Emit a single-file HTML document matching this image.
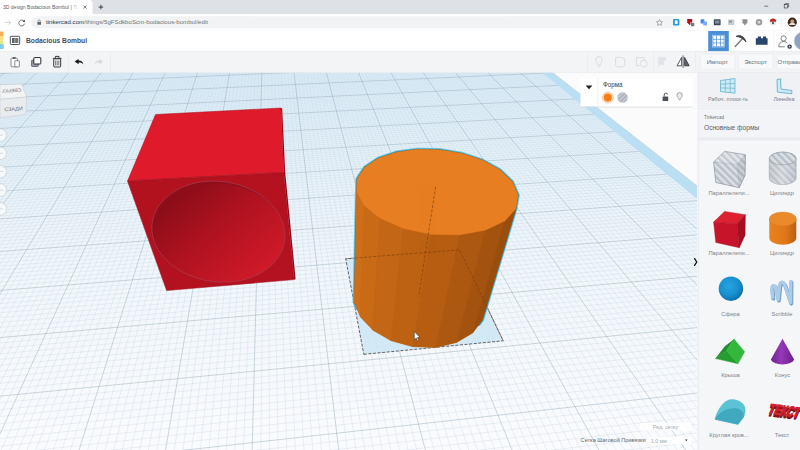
<!DOCTYPE html><html><head><meta charset="utf-8"><title>3D design Bodacious Bombul | Tinkercad</title><style>html,body{margin:0;padding:0;background:#fff;width:800px;height:450px;overflow:hidden}svg{display:block}</style></head><body><svg width="800" height="450" viewBox="0 0 800 450" font-family="'Liberation Sans',sans-serif">
<defs>
<linearGradient id="wpg" x1="0" y1="72" x2="0" y2="450" gradientUnits="userSpaceOnUse">
<stop offset="0" stop-color="#dbedf8"/><stop offset="0.2" stop-color="#e4f1f9"/><stop offset="0.5" stop-color="#f0f6fb"/><stop offset="1" stop-color="#fafbfe"/></linearGradient>
<linearGradient id="ming" x1="0" y1="72" x2="0" y2="450" gradientUnits="userSpaceOnUse"><stop offset="0" stop-color="#94aac2" stop-opacity="0.2"/><stop offset="0.2" stop-color="#94aac2" stop-opacity="0.3"/><stop offset="0.5" stop-color="#94aac2" stop-opacity="0.38"/><stop offset="1" stop-color="#94aac2" stop-opacity="0.42"/></linearGradient>
<clipPath id="cv"><rect x="0" y="72.5" width="697" height="378"/></clipPath>
<linearGradient id="holeg" x1="178" y1="188" x2="255" y2="278" gradientUnits="userSpaceOnUse">
<stop offset="0" stop-color="#8a0d18"/><stop offset="0.45" stop-color="#b01220"/><stop offset="1" stop-color="#d01a29"/></linearGradient>
<linearGradient id="frontg" x1="130" y1="180" x2="290" y2="285" gradientUnits="userSpaceOnUse">
<stop offset="0" stop-color="#b2111e"/><stop offset="1" stop-color="#b41220"/></linearGradient>
<pattern id="stripe" width="3" height="3" patternUnits="userSpaceOnUse" patternTransform="rotate(45)"><rect width="3" height="3" fill="#c9ced6"/><rect width="1.5" height="3" fill="#a9afb8"/></pattern>
<pattern id="stripe2" width="5" height="5" patternUnits="userSpaceOnUse" patternTransform="rotate(-45)"><rect width="5" height="5" fill="#dde1e6"/><rect width="2.5" height="5" fill="#b9bfc8"/></pattern>
<radialGradient id="sph" cx="0.42" cy="0.38" r="0.65"><stop offset="0" stop-color="#27a4e2"/><stop offset="0.6" stop-color="#1790cf"/><stop offset="1" stop-color="#0d6ea5"/></radialGradient>
<linearGradient id="cylg" x1="0" x2="1" y1="0" y2="0"><stop offset="0" stop-color="#e8821f"/><stop offset="0.6" stop-color="#df7718"/><stop offset="1" stop-color="#b95f12"/></linearGradient>
<linearGradient id="coneg" x1="0" x2="1" y1="0" y2="0"><stop offset="0" stop-color="#6f2390"/><stop offset="0.45" stop-color="#9638b8"/><stop offset="1" stop-color="#6a1f8a"/></linearGradient>
<linearGradient id="hcyl" x1="0" x2="1" y1="0" y2="0"><stop offset="0" stop-color="#aeb4bd"/><stop offset="0.5" stop-color="#e4e7eb"/><stop offset="1" stop-color="#a4aab3"/></linearGradient>
</defs>
<rect width="800" height="450" fill="#fbfbfc"/>
<g clip-path="url(#cv)">
<polygon points="-1462.1,926.5 1136.0,530.4 462.2,1.7 -0.9,16.2" fill="url(#wpg)" />
<path d="M-1441.7 923.4L1.7 16.1M-1421.5 920.3L4.2 16.1M-1401.3 917.3L6.7 16.0M-1381.3 914.2L9.2 15.9M-1361.4 911.2L11.7 15.8M-1341.6 908.2L14.2 15.7M-1322.0 905.2L16.7 15.7M-1302.4 902.2L19.2 15.6M-1282.9 899.2L21.7 15.5M-1244.3 893.3L26.7 15.3M-1225.2 890.4L29.2 15.3M-1206.2 887.5L31.7 15.2M-1187.2 884.6L34.2 15.1M-1168.4 881.8L36.7 15.0M-1149.7 878.9L39.2 15.0M-1131.1 876.1L41.7 14.9M-1112.5 873.2L44.2 14.8M-1094.1 870.4L46.6 14.7M-1057.6 864.9L51.6 14.6M-1039.5 862.1L54.1 14.5M-1021.4 859.4L56.5 14.4M-1003.5 856.6L59.0 14.3M-985.7 853.9L61.5 14.3M-967.9 851.2L63.9 14.2M-950.3 848.5L66.4 14.1M-932.7 845.8L68.9 14.0M-915.3 843.2L71.3 13.9M-880.6 837.9L76.2 13.8M-863.5 835.3L78.7 13.7M-846.4 832.7L81.1 13.6M-829.4 830.1L83.6 13.6M-812.5 827.5L86.0 13.5M-795.6 824.9L88.5 13.4M-778.9 822.4L90.9 13.3M-762.2 819.8L93.3 13.3M-745.7 817.3L95.8 13.2M-712.8 812.3L100.6 13.0M-696.5 809.8L103.1 12.9M-680.2 807.3L105.5 12.9M-664.1 804.9L107.9 12.8M-648.0 802.4L110.4 12.7M-632.0 800.0L112.8 12.6M-616.1 797.5L115.2 12.6M-600.3 795.1L117.6 12.5M-584.5 792.7L120.0 12.4M-553.3 788.0L124.9 12.3M-537.8 785.6L127.3 12.2M-522.3 783.2L129.7 12.1M-507.0 780.9L132.1 12.0M-491.7 778.6L134.5 12.0M-476.5 776.3L136.9 11.9M-461.3 773.9L139.3 11.8M-446.3 771.7L141.7 11.7M-431.3 769.4L144.1 11.7M-401.5 764.8L148.9 11.5M-386.8 762.6L151.2 11.4M-372.1 760.3L153.6 11.4M-357.4 758.1L156.0 11.3M-342.9 755.9L158.4 11.2M-328.4 753.7L160.8 11.1M-314.0 751.5L163.2 11.1M-299.6 749.3L165.5 11.0M-285.4 747.1L167.9 10.9M-257.0 742.8L172.6 10.8M-242.9 740.6L175.0 10.7M-228.9 738.5L177.4 10.6M-215.0 736.4L179.7 10.5M-201.1 734.3L182.1 10.5M-187.3 732.2L184.5 10.4M-173.5 730.1L186.8 10.3M-159.9 728.0L189.2 10.2M-146.2 725.9L191.5 10.2M-119.2 721.8L196.2 10.0M-105.8 719.7L198.6 9.9M-92.4 717.7L200.9 9.9M-79.1 715.7L203.3 9.8M-65.8 713.6L205.6 9.7M-52.7 711.6L208.0 9.6M-39.5 709.6L210.3 9.6M-26.5 707.6L212.6 9.5M-13.5 705.7L215.0 9.4M12.4 701.7L219.6 9.3M25.2 699.8L222.0 9.2M38.0 697.8L224.3 9.1M50.7 695.9L226.6 9.1M63.3 693.9L228.9 9.0M75.9 692.0L231.2 8.9M88.5 690.1L233.6 8.8M101.0 688.2L235.9 8.8M113.4 686.3L238.2 8.7M138.1 682.6L242.8 8.6M150.4 680.7L245.1 8.5M162.6 678.8L247.4 8.4M174.7 677.0L249.7 8.3M186.8 675.1L252.0 8.3M198.9 673.3L254.3 8.2M210.9 671.5L256.6 8.1M222.8 669.6L258.9 8.0M234.7 667.8L261.2 8.0M258.4 664.2L265.8 7.8M270.1 662.4L268.1 7.8M281.8 660.6L270.4 7.7M293.4 658.9L272.7 7.6M305.0 657.1L275.0 7.5M316.5 655.3L277.2 7.5M328.0 653.6L279.5 7.4M339.5 651.8L281.8 7.3M350.9 650.1L284.1 7.3M373.5 646.7L288.6 7.1M384.8 644.9L290.9 7.0M396.0 643.2L293.2 7.0M407.1 641.5L295.4 6.9M418.2 639.8L297.7 6.8M429.3 638.2L299.9 6.8M440.3 636.5L302.2 6.7M451.2 634.8L304.5 6.6M462.2 633.1L306.7 6.5M483.9 629.8L311.2 6.4M494.7 628.2L313.5 6.3M505.4 626.5L315.7 6.3M516.1 624.9L318.0 6.2M526.7 623.3L320.2 6.1M537.4 621.7L322.5 6.0M547.9 620.1L324.7 6.0M558.4 618.5L326.9 5.9M568.9 616.9L329.2 5.8M589.7 613.7L333.6 5.7M600.1 612.1L335.9 5.6M610.4 610.5L338.1 5.6M620.7 609.0L340.3 5.5M630.9 607.4L342.6 5.4M641.1 605.9L344.8 5.3M651.2 604.3L347.0 5.3M661.3 602.8L349.2 5.2M671.4 601.2L351.4 5.1M691.4 598.2L355.9 5.0M701.3 596.7L358.1 4.9M711.2 595.2L360.3 4.9M721.1 593.7L362.5 4.8M730.9 592.2L364.7 4.7M740.7 590.7L366.9 4.7M750.4 589.2L369.1 4.6M760.1 587.7L371.3 4.5M769.8 586.2L373.5 4.4M789.0 583.3L377.9 4.3M798.6 581.8L380.1 4.2M808.1 580.4L382.3 4.2M817.6 578.9L384.5 4.1M827.0 577.5L386.7 4.0M836.4 576.1L388.9 4.0M845.8 574.6L391.1 3.9M855.2 573.2L393.3 3.8M864.5 571.8L395.4 3.8M882.9 569.0L399.8 3.6M892.1 567.6L402.0 3.5M901.3 566.2L404.1 3.5M910.4 564.8L406.3 3.4M919.5 563.4L408.5 3.3M928.6 562.0L410.7 3.3M937.6 560.6L412.8 3.2M946.6 559.3L415.0 3.1M955.5 557.9L417.2 3.1M973.3 555.2L421.5 2.9M982.2 553.8L423.6 2.9M991.0 552.5L425.8 2.8M999.8 551.2L428.0 2.7M1008.5 549.8L430.1 2.7M1017.2 548.5L432.3 2.6M1025.9 547.2L434.4 2.5M1034.6 545.9L436.6 2.5M1043.2 544.5L438.7 2.4M1060.3 541.9L443.0 2.3M1068.9 540.6L445.1 2.2M1077.4 539.3L447.3 2.1M1085.8 538.0L449.4 2.1M1094.3 536.8L451.6 2.0M1102.7 535.5L453.7 1.9M1111.0 534.2L455.8 1.9M1119.4 532.9L457.9 1.8M1127.7 531.7L460.1 1.7M-1420.3 900.5L1122.5 519.8M-1380.5 875.7L1109.5 509.6M-1342.6 852.1L1096.8 499.7M-1306.3 829.5L1084.5 490.0M-1271.7 807.9L1072.6 480.7M-1238.5 787.3L1061.0 471.6M-1206.8 767.5L1049.8 462.8M-1176.3 748.5L1038.9 454.2M-1147.1 730.3L1028.2 445.8M-1092.1 696.0L1007.8 429.8M-1066.1 679.9L998.0 422.1M-1041.2 664.3L988.5 414.7M-1017.1 649.3L979.2 407.4M-993.9 634.9L970.1 400.2M-971.6 621.0L961.3 393.3M-950.0 607.5L952.7 386.6M-929.2 594.5L944.3 380.0M-909.0 582.0L936.1 373.5M-870.7 558.1L920.3 361.1M-852.5 546.8L912.6 355.1M-834.8 535.8L905.2 349.3M-817.7 525.1L897.9 343.6M-801.1 514.8L890.8 338.0M-785.0 504.7L883.8 332.5M-769.4 495.0L877.0 327.2M-754.3 485.6L870.4 322.0M-739.5 476.4L863.8 316.8M-711.3 458.8L851.2 306.9M-697.8 450.4L845.1 302.1M-684.7 442.2L839.1 297.5M-671.9 434.2L833.3 292.9M-659.4 426.5L827.5 288.4M-647.3 418.9L821.9 283.9M-635.5 411.6L816.4 279.6M-624.0 404.4L811.0 275.4M-612.7 397.4L805.7 271.2M-591.1 383.9L795.4 263.1M-580.7 377.4L790.4 259.2M-570.5 371.1L785.5 255.4M-560.6 364.9L780.7 251.6M-550.9 358.9L775.9 247.9M-541.4 353.0L771.3 244.2M-532.2 347.2L766.7 240.7M-523.1 341.6L762.3 237.1M-514.3 336.1L757.9 233.7M-497.2 325.4L749.3 227.0M-488.9 320.3L745.1 223.7M-480.8 315.2L741.1 220.5M-472.9 310.3L737.0 217.3M-465.1 305.4L733.1 214.2M-457.5 300.7L729.2 211.2M-450.1 296.1L725.3 208.2M-442.8 291.5L721.6 205.2M-435.6 287.1L717.9 202.3M-421.8 278.4L710.6 196.6M-415.0 274.2L707.1 193.8M-408.4 270.1L703.6 191.1M-402.0 266.1L700.2 188.4M-395.6 262.1L696.9 185.8M-389.4 258.3L693.5 183.2M-383.3 254.4L690.3 180.6M-377.3 250.7L687.1 178.1M-371.4 247.0L683.9 175.6M-359.9 239.9L677.7 170.8M-354.3 236.4L674.7 168.4M-348.8 233.0L671.7 166.1M-343.4 229.6L668.8 163.8M-338.1 226.3L665.9 161.5M-332.9 223.1L663.0 159.2M-327.8 219.9L660.2 157.0M-322.8 216.8L657.4 154.9M-317.9 213.7L654.7 152.7M-308.2 207.7L649.3 148.5M-303.5 204.8L646.7 146.5M-298.9 201.9L644.1 144.4M-294.3 199.0L641.6 142.4M-289.9 196.2L639.1 140.4M-285.4 193.5L636.6 138.5M-281.1 190.8L634.1 136.6M-276.8 188.1L631.7 134.7M-272.6 185.5L629.3 132.8M-264.4 180.4L624.6 129.1M-260.4 177.9L622.3 127.3M-256.4 175.4L620.1 125.5M-252.5 173.0L617.8 123.8M-248.7 170.6L615.6 122.1M-244.9 168.2L613.4 120.3M-241.2 165.9L611.3 118.7M-237.5 163.6L609.2 117.0M-233.9 161.4L607.1 115.3M-226.8 157.0L602.9 112.1M-223.3 154.8L600.9 110.5M-219.9 152.7L598.9 108.9M-216.5 150.6L596.9 107.4M-213.2 148.5L595.0 105.9M-209.9 146.4L593.0 104.3M-206.7 144.4L591.1 102.8M-203.5 142.4L589.3 101.4M-200.3 140.5L587.4 99.9M-194.1 136.6L583.7 97.0M-191.1 134.7L581.9 95.6M-188.1 132.9L580.1 94.2M-185.2 131.0L578.4 92.8M-182.2 129.2L576.6 91.5M-179.4 127.4L574.9 90.1M-176.5 125.7L573.2 88.8M-173.7 123.9L571.5 87.5M-171.0 122.2L569.9 86.1M-165.5 118.8L566.6 83.6M-162.9 117.1L565.0 82.3M-160.2 115.5L563.4 81.1M-157.6 113.9L561.8 79.8M-155.1 112.3L560.3 78.6M-152.5 110.7L558.7 77.4M-150.0 109.1L557.2 76.2M-147.5 107.6L555.7 75.0M-145.1 106.1L554.2 73.8M-140.3 103.1L551.2 71.5M-137.9 101.6L549.8 70.4M-135.6 100.1L548.3 69.3M-133.2 98.7L546.9 68.1M-131.0 97.3L545.5 67.0M-128.7 95.9L544.1 65.9M-126.5 94.5L542.7 64.9M-124.3 93.1L541.4 63.8M-122.1 91.7L540.0 62.7M-117.8 89.0L537.4 60.6M-115.7 87.7L536.0 59.6M-113.6 86.4L534.7 58.6M-111.5 85.1L533.5 57.6M-109.5 83.9L532.2 56.6M-107.4 82.6L530.9 55.6M-105.4 81.4L529.7 54.6M-103.5 80.1L528.4 53.6M-101.5 78.9L527.2 52.7M-97.6 76.5L524.8 50.8M-95.7 75.3L523.6 49.8M-93.9 74.2L522.4 48.9M-92.0 73.0L521.2 48.0M-90.2 71.8L520.1 47.1M-88.3 70.7L518.9 46.2M-86.5 69.6L517.8 45.3M-84.8 68.5L516.7 44.4M-83.0 67.4L515.5 43.5M-79.5 65.2L513.3 41.8M-77.8 64.1L512.2 40.9M-76.1 63.1L511.2 40.1M-74.4 62.0L510.1 39.2M-72.7 61.0L509.0 38.4M-71.1 60.0L508.0 37.6M-69.5 59.0L506.9 36.8M-67.9 57.9L505.9 36.0M-66.2 56.9L504.9 35.1M-63.1 55.0L502.9 33.6M-61.5 54.0L501.9 32.8M-60.0 53.0L500.9 32.0M-58.5 52.1L499.9 31.2M-56.9 51.2L498.9 30.5M-55.5 50.2L497.9 29.7M-54.0 49.3L497.0 29.0M-52.5 48.4L496.0 28.2M-51.0 47.5L495.1 27.5M-48.2 45.7L493.2 26.0M-46.7 44.8L492.3 25.3M-45.3 43.9L491.4 24.6M-43.9 43.0L490.5 23.9M-42.6 42.2L489.6 23.2M-41.2 41.3L488.7 22.5M-39.8 40.5L487.8 21.8M-38.5 39.6L487.0 21.1M-37.1 38.8L486.1 20.4M-34.5 37.2L484.4 19.1M-33.2 36.4L483.5 18.4M-31.9 35.6L482.7 17.7M-30.6 34.8L481.9 17.1M-29.4 34.0L481.0 16.4M-28.1 33.2L480.2 15.8M-26.9 32.4L479.4 15.1M-25.6 31.6L478.6 14.5M-24.4 30.9L477.8 13.9M-22.0 29.4L476.2 12.6M-20.8 28.6L475.4 12.0M-19.6 27.9L474.6 11.4M-18.4 27.2L473.8 10.8M-17.3 26.4L473.1 10.2M-16.1 25.7L472.3 9.6M-15.0 25.0L471.6 9.0M-13.8 24.3L470.8 8.4M-12.7 23.6L470.1 7.8M-10.5 22.2L468.6 6.7M-9.4 21.5L467.9 6.1M-8.3 20.8L467.1 5.5M-7.2 20.2L466.4 5.0M-6.1 19.5L465.7 4.4M-5.1 18.8L465.0 3.8M-4.0 18.2L464.3 3.3M-2.9 17.5L463.6 2.7M-1.9 16.9L462.9 2.2" stroke="url(#ming)" stroke-width="0.4" fill="none"/>
<path d="M-1462.1 926.5L-0.9 16.2M-1263.6 896.3L24.2 15.4M-1075.8 867.6L49.1 14.6M-897.9 840.5L73.8 13.9M-729.2 814.8L98.2 13.1M-568.9 790.3L122.4 12.3M-416.4 767.1L146.5 11.6M-271.2 744.9L170.3 10.8M-132.7 723.8L193.9 10.1M-0.5 703.7L217.3 9.4M125.8 684.4L240.5 8.6M246.6 666.0L263.5 7.9M362.2 648.4L286.3 7.2M473.0 631.5L309.0 6.5M579.3 615.3L331.4 5.8M681.4 599.7L353.7 5.1M779.4 584.8L375.7 4.4M873.7 570.4L397.6 3.7M964.4 556.6L419.3 3.0M1051.8 543.2L440.9 2.3M1136.0 530.4L462.2 1.7M-1462.1 926.5L1136.0 530.4M-1119.0 712.8L1017.9 437.7M-889.6 569.9L928.1 367.3M-725.2 467.5L857.5 311.8M-601.8 390.6L800.5 267.1M-505.6 330.7L753.6 230.3M-428.6 282.7L714.2 199.4M-365.6 243.4L680.8 173.2M-313.0 210.7L652.0 150.6M-268.5 182.9L627.0 130.9M-230.3 159.2L605.0 113.7M-197.2 138.5L585.5 98.4M-168.2 120.5L568.2 84.9M-142.7 104.5L552.7 72.7M-119.9 90.4L538.7 61.7M-99.6 77.7L526.0 51.7M-81.2 66.3L514.4 42.6M-64.7 56.0L503.9 34.3M-49.6 46.6L494.2 26.7M-35.8 38.0L485.2 19.7M-23.2 30.1L477.0 13.2M-11.6 22.9L469.3 7.2M-0.9 16.2L462.2 1.7" stroke="#8298aa" stroke-width="0.55" fill="none" opacity="0.7"/>
<polygon points="1109.4,534.5 1136.0,530.4 462.2,1.7 455.4,1.9" fill="#badef2" />
<polygon points="281.0,108.0 282.2,108.4 285.2,172.2 295.6,279.0 294.2,279.6 283.8,172.5" fill="#8e0d18" />
<polygon points="155.5,114.5 281.0,108.0 283.8,172.5 127.5,181.0" fill="#df1b2b" stroke="#a3101c" stroke-width="0.5" stroke-linejoin="round"/>
<polygon points="127.5,181.0 283.8,172.5 294.2,279.6 166.6,290.6" fill="url(#frontg)" stroke="#9c0f1a" stroke-width="0.5" stroke-linejoin="round"/>
<clipPath id="holec"><polygon points="284.8,231.5 285.0,235.8 284.7,240.0 284.0,244.2 282.8,248.2 281.2,252.1 279.2,255.8 276.8,259.3 274.0,262.7 270.8,265.8 267.4,268.7 263.6,271.3 259.5,273.7 255.2,275.8 250.7,277.6 246.0,279.1 241.1,280.3 236.0,281.3 230.9,281.9 225.6,282.1 220.3,282.1 215.0,281.7 209.7,281.1 204.4,280.1 199.2,278.7 194.0,277.1 189.0,275.1 184.2,272.8 179.6,270.3 175.2,267.4 171.1,264.3 167.3,260.9 163.9,257.3 160.8,253.5 158.1,249.4 155.9,245.2 154.1,240.9 152.8,236.4 152.1,231.9 151.8,227.4 152.2,222.8 153.0,218.3 154.5,213.8 156.5,209.5 159.0,205.4 162.1,201.5 165.7,197.8 169.8,194.4 174.3,191.3 179.2,188.6 184.6,186.3 190.2,184.3 196.1,182.8 202.2,181.8 208.4,181.2 214.7,181.1 221.1,181.4 227.4,182.2 233.6,183.5 239.6,185.1 245.4,187.2 250.9,189.6 256.2,192.4 261.0,195.4 265.5,198.8 269.6,202.4 273.2,206.2 276.3,210.2 279.0,214.3 281.2,218.6 282.9,222.9 284.1,227.2"/></clipPath>
<polygon points="284.8,231.5 285.0,235.8 284.7,240.0 284.0,244.2 282.8,248.2 281.2,252.1 279.2,255.8 276.8,259.3 274.0,262.7 270.8,265.8 267.4,268.7 263.6,271.3 259.5,273.7 255.2,275.8 250.7,277.6 246.0,279.1 241.1,280.3 236.0,281.3 230.9,281.9 225.6,282.1 220.3,282.1 215.0,281.7 209.7,281.1 204.4,280.1 199.2,278.7 194.0,277.1 189.0,275.1 184.2,272.8 179.6,270.3 175.2,267.4 171.1,264.3 167.3,260.9 163.9,257.3 160.8,253.5 158.1,249.4 155.9,245.2 154.1,240.9 152.8,236.4 152.1,231.9 151.8,227.4 152.2,222.8 153.0,218.3 154.5,213.8 156.5,209.5 159.0,205.4 162.1,201.5 165.7,197.8 169.8,194.4 174.3,191.3 179.2,188.6 184.6,186.3 190.2,184.3 196.1,182.8 202.2,181.8 208.4,181.2 214.7,181.1 221.1,181.4 227.4,182.2 233.6,183.5 239.6,185.1 245.4,187.2 250.9,189.6 256.2,192.4 261.0,195.4 265.5,198.8 269.6,202.4 273.2,206.2 276.3,210.2 279.0,214.3 281.2,218.6 282.9,222.9 284.1,227.2" fill="#8f0e1a" />
<g clip-path="url(#holec)"><polygon points="284.8,231.5 285.0,235.8 284.7,240.0 284.0,244.2 282.8,248.2 281.2,252.1 279.2,255.8 276.8,259.3 274.0,262.7 270.8,265.8 267.4,268.7 263.6,271.3 259.5,273.7 255.2,275.8 250.7,277.6 246.0,279.1 241.1,280.3 236.0,281.3 230.9,281.9 225.6,282.1 220.3,282.1 215.0,281.7 209.7,281.1 204.4,280.1 199.2,278.7 194.0,277.1 189.0,275.1 184.2,272.8 179.6,270.3 175.2,267.4 171.1,264.3 167.3,260.9 163.9,257.3 160.8,253.5 158.1,249.4 155.9,245.2 154.1,240.9 152.8,236.4 152.1,231.9 151.8,227.4 152.2,222.8 153.0,218.3 154.5,213.8 156.5,209.5 159.0,205.4 162.1,201.5 165.7,197.8 169.8,194.4 174.3,191.3 179.2,188.6 184.6,186.3 190.2,184.3 196.1,182.8 202.2,181.8 208.4,181.2 214.7,181.1 221.1,181.4 227.4,182.2 233.6,183.5 239.6,185.1 245.4,187.2 250.9,189.6 256.2,192.4 261.0,195.4 265.5,198.8 269.6,202.4 273.2,206.2 276.3,210.2 279.0,214.3 281.2,218.6 282.9,222.9 284.1,227.2" fill="url(#holeg)" transform="translate(2 2.4)"/></g>
<polygon points="284.8,231.5 285.0,235.8 284.7,240.0 284.0,244.2 282.8,248.2 281.2,252.1 279.2,255.8 276.8,259.3 274.0,262.7 270.8,265.8 267.4,268.7 263.6,271.3 259.5,273.7 255.2,275.8 250.7,277.6 246.0,279.1 241.1,280.3 236.0,281.3 230.9,281.9 225.6,282.1 220.3,282.1 215.0,281.7 209.7,281.1 204.4,280.1 199.2,278.7 194.0,277.1 189.0,275.1 184.2,272.8 179.6,270.3 175.2,267.4 171.1,264.3 167.3,260.9 163.9,257.3 160.8,253.5 158.1,249.4 155.9,245.2 154.1,240.9 152.8,236.4 152.1,231.9 151.8,227.4 152.2,222.8 153.0,218.3 154.5,213.8 156.5,209.5 159.0,205.4 162.1,201.5 165.7,197.8 169.8,194.4 174.3,191.3 179.2,188.6 184.6,186.3 190.2,184.3 196.1,182.8 202.2,181.8 208.4,181.2 214.7,181.1 221.1,181.4 227.4,182.2 233.6,183.5 239.6,185.1 245.4,187.2 250.9,189.6 256.2,192.4 261.0,195.4 265.5,198.8 269.6,202.4 273.2,206.2 276.3,210.2 279.0,214.3 281.2,218.6 282.9,222.9 284.1,227.2" fill="none" stroke="#a8465a" stroke-width="0.8" stroke-opacity="0.8"/>
<polygon points="363.8,354.3 503.2,340.8 459.6,249.8 345.7,258.8" fill="#cfe7f5" fill-opacity="0.9"/>
<polygon points="363.8,354.3 503.2,340.8 459.6,249.8 345.7,258.8" fill="none" stroke="#2a2a2a" stroke-width="0.7" stroke-dasharray="3 1.6"/>
<clipPath id="oc"><polygon points="300,100 600,100 600,327 488,327 352,309 300,309"/></clipPath>
<polygon points="482.4,320.1 472.6,333.0 456.5,342.6 435.8,347.4 413.0,346.8 391.2,340.8 373.0,330.3 360.4,316.9 354.2,302.3 356.5,192.1 357.0,178.9 364.6,167.4 378.1,158.3 396.1,152.2 417.0,149.3 439.3,149.7 461.6,153.3 482.3,160.1 499.8,169.7 512.4,181.7 518.2,195.1 515.9,208.8" fill="#c06418" stroke="#62c6e2" stroke-width="3.2" stroke-linejoin="round" clip-path="url(#oc)"/>
<polygon points="482.4,320.1 472.6,333.0 456.5,342.6 435.8,347.4 413.0,346.8 391.2,340.8 373.0,330.3 360.4,316.9 354.2,302.3 356.5,192.1 357.0,178.9 364.6,167.4 378.1,158.3 396.1,152.2 417.0,149.3 439.3,149.7 461.6,153.3 482.3,160.1 499.8,169.7 512.4,181.7 518.2,195.1 515.9,208.8" fill="#c06418" stroke="#2c89a6" stroke-width="1.3" stroke-linejoin="round" clip-path="url(#oc)"/>
<polygon points="482.4,320.1 472.6,333.0 456.5,342.6 435.8,347.4 413.0,346.8 391.2,340.8 373.0,330.3 360.4,316.9 354.2,302.3 356.5,192.1 357.0,178.9 364.6,167.4 378.1,158.3 396.1,152.2 417.0,149.3 439.3,149.7 461.6,153.3 482.3,160.1 499.8,169.7 512.4,181.7 518.2,195.1 515.9,208.8" fill="#c06418" />
<polygon points="356.5,192.1 364.2,205.8 360.4,316.9 354.2,302.3" fill="rgb(207,110,25)" stroke="rgb(207,110,25)" stroke-width="0.4"/>
<polygon points="364.2,205.8 380.2,218.5 373.0,330.3 360.4,316.9" fill="rgb(201,106,23)" stroke="rgb(201,106,23)" stroke-width="0.4"/>
<polygon points="380.2,218.5 403.2,228.6 391.2,340.8 373.0,330.3" fill="rgb(195,102,21)" stroke="rgb(195,102,21)" stroke-width="0.4"/>
<polygon points="403.2,228.6 430.9,234.4 413.0,346.8 391.2,340.8" fill="rgb(189,98,19)" stroke="rgb(189,98,19)" stroke-width="0.4"/>
<polygon points="430.9,234.4 459.6,235.0 435.8,347.4 413.0,346.8" fill="rgb(182,93,18)" stroke="rgb(182,93,18)" stroke-width="0.4"/>
<polygon points="459.6,235.0 485.3,230.3 456.5,342.6 435.8,347.4" fill="rgb(172,88,16)" stroke="rgb(172,88,16)" stroke-width="0.4"/>
<polygon points="485.3,230.3 504.8,221.1 472.6,333.0 456.5,342.6" fill="rgb(163,83,15)" stroke="rgb(163,83,15)" stroke-width="0.4"/>
<polygon points="504.8,221.1 515.9,208.8 482.4,320.1 472.6,333.0" fill="rgb(154,78,14)" stroke="rgb(154,78,14)" stroke-width="0.4"/>
<polygon points="512.4,181.7 499.8,169.7 482.3,160.1 461.6,153.3 439.3,149.7 417.0,149.3 396.1,152.2 378.1,158.3 364.6,167.4 357.0,178.9 356.5,192.1 364.2,205.8 380.2,218.5 403.2,228.6 430.9,234.4 459.6,235.0 485.3,230.3 504.8,221.1 515.9,208.8 518.2,195.1" fill="#e77e22" stroke="#d87620" stroke-width="0.4"/>
<path d="M435.6 186.8L418.7 296.7" stroke="#6b3208" stroke-width="0.7" stroke-dasharray="3 1.6" opacity="0.75"/>
<path d="M345.7 258.8L459.6 249.8L503.2 340.8" fill="none" stroke="#6b3208" stroke-width="0.7" stroke-dasharray="3 1.6" opacity="0.7"/>
<clipPath id="cylclip"><polygon points="482.4,320.1 472.6,333.0 456.5,342.6 435.8,347.4 413.0,346.8 391.2,340.8 373.0,330.3 360.4,316.9 354.2,302.3 356.5,192.1 357.0,178.9 364.6,167.4 378.1,158.3 396.1,152.2 417.0,149.3 439.3,149.7 461.6,153.3 482.3,160.1 499.8,169.7 512.4,181.7 518.2,195.1 515.9,208.8"/></clipPath>
<polygon points="0.0,84.7 21.7,84.0 26.7,97.1 0.0,99.3" fill="#f1f3f5" stroke="#c3c8ce" stroke-width="0.5"/>
<polygon points="0.0,99.3 26.7,97.1 25.8,114.3 1.7,117.7 0.0,117.4" fill="#e9ecef" stroke="#c3c8ce" stroke-width="0.5"/>
<text x="11.6" y="92.2" font-size="4.7" fill="#666b74" text-anchor="middle" font-weight="normal" transform="rotate(175 11.6 90.6)" textLength="19" lengthAdjust="spacingAndGlyphs">СВЕРХУ</text>
<text x="13.6" y="110.6" font-size="5" fill="#666b74" text-anchor="middle" font-weight="normal" transform="rotate(-4 13.6 109)" textLength="18.4" lengthAdjust="spacingAndGlyphs">СЗАДИ</text>
<circle cx="0.2" cy="135.1" r="6.3" fill="#ffffff" fill-opacity="0.7" stroke="#c2c7cd" stroke-width="0.6"/>
<path d="M0 135.1 h3" stroke="#c9cdd3" stroke-width="0.7"/>
<circle cx="0.2" cy="153.3" r="6.3" fill="#ffffff" fill-opacity="0.7" stroke="#c2c7cd" stroke-width="0.6"/>
<path d="M0 153.3 h3" stroke="#c9cdd3" stroke-width="0.7"/>
<circle cx="0.2" cy="171.6" r="6.3" fill="#ffffff" fill-opacity="0.7" stroke="#c2c7cd" stroke-width="0.6"/>
<path d="M0 171.6 h3" stroke="#c9cdd3" stroke-width="0.7"/>
<circle cx="0.2" cy="190.0" r="6.3" fill="#ffffff" fill-opacity="0.7" stroke="#c2c7cd" stroke-width="0.6"/>
<path d="M0 190.0 h3" stroke="#c9cdd3" stroke-width="0.7"/>
<circle cx="0.2" cy="208.9" r="6.3" fill="#ffffff" fill-opacity="0.7" stroke="#c2c7cd" stroke-width="0.6"/>
<path d="M0 208.9 h3" stroke="#c9cdd3" stroke-width="0.7"/>
</g>
<path d="M414.3 331.6 l0 8.2 l1.9 -1.8 l1.3 2.9 l1.2 -0.5 l-1.3 -2.8 l2.6 -0.1 z" fill="#fff" stroke="#222" stroke-width="0.5"/>
<rect x="580.5" y="78" width="112" height="28.5" fill="#ffffff"/>
<rect x="580.5" y="106.5" width="112" height="1.2" fill="#d9dce0" opacity="0.7"/>
<rect x="597.6" y="78" width="0.6" height="28.5" fill="#e4e6e9"/>
<path d="M585.6 85.4 h6.8 l-3.4 3.8z" fill="#222"/>
<text x="603.0" y="87.0" font-size="6.3" fill="#3d4045" text-anchor="start" font-weight="normal" >Форма</text>
<circle cx="607.8" cy="97.6" r="5.6" fill="#fbe3cc" stroke="#f0a868" stroke-width="0.5"/><circle cx="607.8" cy="97.6" r="4.1" fill="#f57f17"/>
<circle cx="622.6" cy="97.6" r="5" fill="url(#stripe)" stroke="#b9bec6" stroke-width="0.4"/>
<rect x="662.6" y="96.6" width="5.6" height="4.4" rx="0.6" fill="#4a4f57"/><path d="M664.2 96.6 v-1.6 a1.7 1.7 0 0 1 3.4 -0.4" fill="none" stroke="#4a4f57" stroke-width="0.9"/>
<path d="M679.6 92.6 a2.7 2.7 0 0 1 2.7 2.7 c0 1.6 -1.5 2.6 -2.7 4.9 c-1.2 -2.3 -2.7 -3.3 -2.7 -4.9 a2.7 2.7 0 0 1 2.7 -2.7z" fill="#e9ebee" stroke="#8d9299" stroke-width="0.8"/>
<rect x="640" y="423" width="51" height="7.6" fill="#ffffff" fill-opacity="0.8"/>
<text x="665.5" y="428.8" font-size="5.4" fill="#a9adb3" text-anchor="middle" font-weight="normal" >Ред. сетку</text>
<text x="580.6" y="442.3" font-size="5.6" fill="#666b73" text-anchor="start" font-weight="normal" >Сетка Шаговой Привязки</text>
<rect x="648" y="436.6" width="43" height="7.8" fill="#ffffff"/>
<text x="651.0" y="442.5" font-size="5.2" fill="#a4a8ae" text-anchor="start" font-weight="normal" >1,0 мм</text>
<path d="M685 439.6 h2.6 l-1.3 1.6z" fill="#333"/>
<rect x="697" y="72" width="103" height="378" fill="#ebedf1"/>
<rect x="697" y="72" width="0.6" height="378" fill="#f7f8fa"/>
<rect x="699" y="72.5" width="101" height="37" fill="#eff1f4"/>
<rect x="697.6" y="109.8" width="103" height="1.4" fill="#f6f7f9"/>
<rect x="699" y="111.2" width="101" height="26.3" fill="#f3f4f7"/>
<rect x="697.6" y="137.5" width="103" height="3" fill="#eaecf0"/>
<rect x="699" y="140.5" width="101" height="310" fill="#f5f6f8"/>
<text x="704.0" y="118.6" font-size="4.6" fill="#6d7279" text-anchor="start" font-weight="normal" >Tinkercad</text>
<text x="704.0" y="129.8" font-size="6.6" fill="#5a5f67" text-anchor="start" font-weight="normal" >Основные формы</text>
<g stroke="#3e9fc4" stroke-width="0.6" fill="#cfeaf6">
<path d="M720.5 80.5 L735 78.5 L735 93.2 L720.5 91.6z"/>
<path d="M725.3 79.8 L725.3 92.1 M730.2 79.2 L730.2 92.7 M720.5 84.2 L735 83.4 M720.5 87.9 L735 88.3" fill="none" stroke-width="0.5"/>
</g>
<text x="728.0" y="101.4" font-size="5.45" fill="#7b8087" text-anchor="middle" font-weight="normal" >Рабоч. плоск-ть</text>
<path d="M777 79.5 l3.6 -0.6 l0.4 10.2 l10.8 1.4 l0 3.2 l-14.4 -1.6z" fill="#cfeaf6" stroke="#3e9fc4" stroke-width="0.7" stroke-linejoin="round"/>
<text x="784.0" y="101.4" font-size="5.45" fill="#7b8087" text-anchor="middle" font-weight="normal" >Линейка</text>
<polygon points="713.6,162.0 724.6,151.4 745.4,154.7 745.1,175.2 739.3,187.7 715.8,182.5" fill="url(#stripe2)" stroke="#7d838c" stroke-width="0.6" stroke-linejoin="round"/>
<polygon points="737.0,164.2 745.4,154.7 745.1,175.2 739.3,187.7" fill="#6a7078" opacity="0.14"/>
<polygon points="713.6,162.0 724.6,151.4 745.4,154.7 737.0,164.2" fill="#ffffff" opacity="0.18"/>
<path d="M713.6 162.0L737.0 164.2L745.4 154.7M737.0 164.2L739.3 187.7" stroke="#8b919a" stroke-width="0.35" fill="none" opacity="0.7"/>
<text x="729.0" y="195.0" font-size="5.75" fill="#7d828a" text-anchor="middle" font-weight="normal" >Параллелепи...</text>
<path d="M769.3 158.5 L769.3 178 A13.4 6.6 0 0 0 796.1 178 L796.1 158.5 A13.4 6.4 0 0 0 769.3 158.5z" fill="url(#stripe2)" stroke="#8a9099" stroke-width="0.5"/>
<path d="M769.3 158.5 L769.3 178 A13.4 6.6 0 0 0 796.1 178 L796.1 158.5z" fill="url(#hcyl)" opacity="0.35"/>
<ellipse cx="782.7" cy="158.5" rx="13.4" ry="6.4" fill="url(#stripe2)" stroke="#8a9099" stroke-width="0.5"/>
<text x="782.0" y="195.0" font-size="5.75" fill="#7d828a" text-anchor="middle" font-weight="normal" >Цилиндр</text>
<polygon points="713.6,222.0 724.6,211.4 745.4,214.7 737.0,224.2" fill="#dc2231" stroke="#a80f1e" stroke-width="0.4"/>
<polygon points="713.6,222.0 737.0,224.2 739.3,247.7 715.8,242.5" fill="#c8142a" stroke="#a80f1e" stroke-width="0.4"/>
<polygon points="737.0,224.2 745.4,214.7 745.1,235.2 739.3,247.7" fill="#a60f22" stroke="#960c1c" stroke-width="0.4"/>
<text x="729.0" y="255.3" font-size="5.75" fill="#7d828a" text-anchor="middle" font-weight="normal" >Параллелепи...</text>
<path d="M769.3 219 L769.3 238 A13.5 6.8 0 0 0 796.3 238 L796.3 219z" fill="url(#cylg)"/>
<ellipse cx="782.8" cy="219" rx="13.5" ry="6.9" fill="#ea8a2b" stroke="#d9751a" stroke-width="0.4"/>
<text x="782.0" y="255.3" font-size="5.75" fill="#7d828a" text-anchor="middle" font-weight="normal" >Цилиндр</text>
<circle cx="730.9" cy="288.7" r="12.2" fill="url(#sph)"/>
<text x="730.5" y="316.0" font-size="5.75" fill="#7d828a" text-anchor="middle" font-weight="normal" >Сфера</text>
<path d="M772.6 297.5 L771.8 288.5 Q772.2 284 775.2 286.5 L778.2 299.5 L779.6 285 Q781.5 279.8 784.6 284.5 L790.6 302.5 L790.8 281.5" fill="none" stroke="#7ea6cb" stroke-width="3.6" stroke-linejoin="round" stroke-linecap="round" transform="translate(0.9 1.3)"/>
<path d="M772.6 297.5 L771.8 288.5 Q772.2 284 775.2 286.5 L778.2 299.5 L779.6 285 Q781.5 279.8 784.6 284.5 L790.6 302.5 L790.8 281.5" fill="none" stroke="#6f9ac2" stroke-width="3.6" stroke-linejoin="round" stroke-linecap="round" transform="translate(0.4 0.6)"/>
<path d="M772.6 297.5 L771.8 288.5 Q772.2 284 775.2 286.5 L778.2 299.5 L779.6 285 Q781.5 279.8 784.6 284.5 L790.6 302.5 L790.8 281.5" fill="none" stroke="#abcbe6" stroke-width="3.4" stroke-linejoin="round" stroke-linecap="round"/>
<text x="782.0" y="316.0" font-size="5.75" fill="#7d828a" text-anchor="middle" font-weight="normal" >Scribble</text>
<polygon points="715.6,358.6 724.9,346.4 734.2,339.2 726.6,350.2" fill="#1d8c2a" stroke="#1d8c2a" stroke-width="0.4"/>
<polygon points="715.6,358.6 726.6,350.2 738.0,363.7" fill="#249e30" stroke="#249e30" stroke-width="0.4"/>
<polygon points="726.6,350.2 734.2,339.2 744.7,351.8 738.0,363.7" fill="#34b73d" stroke="#34b73d" stroke-width="0.4"/>
<text x="730.5" y="377.0" font-size="5.75" fill="#7d828a" text-anchor="middle" font-weight="normal" >Крыша</text>
<path d="M782.5 338.7 L770.9 359.6 A11.7 5.6 0 0 0 794.1 359.6z" fill="url(#coneg)"/>
<text x="782.5" y="377.0" font-size="5.75" fill="#7d828a" text-anchor="middle" font-weight="normal" >Конус</text>
<path d="M715.2 418.2 C717.5 411 721.5 404 726.2 401.3 C729 399.6 731 399.4 733.3 399.6 C737 400 740 401.2 741.8 403 C743.8 404.8 745 406.5 745.2 408.9 C745.4 412 744.6 415 743.5 417.3 L738 424.5 L715.2 419.4z" fill="#5cc3d5" stroke="#4fb6c9" stroke-width="0.4"/>
<path d="M715.2 418.6 C720 411.5 729 407.2 737 408.6 C742 409.8 744.6 413 743.5 417.3 L738 424.5 L715.2 419.4z" fill="#40a9bf"/>
<text x="729.0" y="437.3" font-size="5.75" fill="#7d828a" text-anchor="middle" font-weight="normal" >Круглая кров...</text>
<g transform="translate(784.5 410.5) rotate(7) skewX(-16)">
<text x="0.8" y="7" font-size="14.5" font-weight="bold" fill="#86101a" stroke="#86101a" stroke-width="1.6" stroke-linejoin="round" text-anchor="middle" textLength="31" lengthAdjust="spacingAndGlyphs">ТЕКСТ</text>
<text x="0" y="5.2" font-size="14.5" font-weight="bold" fill="#d0212e" stroke="#d0212e" stroke-width="0.9" stroke-linejoin="round" text-anchor="middle" textLength="31" lengthAdjust="spacingAndGlyphs">ТЕКСТ</text>
</g>
<text x="782.0" y="437.3" font-size="5.75" fill="#7d828a" text-anchor="middle" font-weight="normal" >Текст</text>
<path d="M694.3 258.2 l2.4 3.8 l-2.4 3.8" fill="none" stroke="#111" stroke-width="1.3"/>
<rect x="0" y="0" width="800" height="14.2" fill="#dee1e6"/>
<path d="M0 0 H89 Q92.5 0 92.5 3.5 V14.2 H0z" fill="#ffffff"/>
<text x="3.0" y="9.3" font-size="5" fill="#5b5f65" text-anchor="start" font-weight="normal" textLength="74" lengthAdjust="spacingAndGlyphs">3D design Bodacious Bombul | Ti</text>
<rect x="72" y="2" width="10" height="11" fill="#fff" opacity="0.6"/>
<path d="M83.6 5.6 l3 3 M86.6 5.6 l-3 3" stroke="#3c4043" stroke-width="0.7"/>
<path d="M98.6 7.1 h4.6 M100.9 4.8 v4.6" stroke="#202124" stroke-width="0.8"/>
<path d="M764.2 6.2 h4" stroke="#333" stroke-width="0.6"/>
<rect x="784.2" y="4.6" width="3.4" height="3.4" fill="none" stroke="#333" stroke-width="0.6"/><path d="M785.2 4.6 v-1 h3.4 v3.4 h-1" fill="none" stroke="#333" stroke-width="0.6"/>
<rect x="0" y="14.2" width="800" height="16" fill="#ffffff"/>
<rect x="31.5" y="16.2" width="648" height="12.4" rx="6.2" fill="#f1f3f4"/>
<path d="M5 22.5 h5.6 M8.4 20.3 l2.3 2.2 l-2.3 2.2" fill="none" stroke="#c3c6ca" stroke-width="0.7"/>
<path d="M24.1 21.3 a2.9 2.9 0 1 0 0.5 2.3" fill="none" stroke="#4d5156" stroke-width="0.8"/><path d="M24.9 19.4 v2.5 h-2.5z" fill="#4d5156"/>
<rect x="37.4" y="21.9" width="3.6" height="2.9" rx="0.4" fill="#5f6368"/><path d="M38.1 21.9 v-0.9 a1.1 1.1 0 0 1 2.2 0 v0.9" fill="none" stroke="#5f6368" stroke-width="0.6"/>
<text x="46" y="24.3" font-size="5.6" fill="#70757a" textLength="162" lengthAdjust="spacingAndGlyphs"><tspan fill="#303438">tinkercad.com</tspan>/things/5gFSdkboScm-bodacious-bombul/edit</text>
<path d="M659.5 19.6 l0.9 1.9 l2.1 0.3 l-1.5 1.4 l0.4 2.1 l-1.9 -1 l-1.9 1 l0.4 -2.1 l-1.5 -1.4 l2.1 -0.3z" fill="none" stroke="#5f6368" stroke-width="0.5"/>
<rect x="673" y="19" width="6.4" height="6.4" rx="1" fill="#1d9be0"/><rect x="674.8" y="20.4" width="2.8" height="3.6" fill="#fff"/>
<path d="M687.2 19 h5 v3.4 l-2.5 2.8 l-2.5 -2.8z" fill="#b3121d"/><rect x="690.8" y="22.8" width="3.6" height="3.6" fill="#6c7a80" stroke="#fff" stroke-width="0.4"/>
<rect x="700.6" y="19.2" width="3.8" height="4.4" rx="0.5" fill="#4a86e8"/><rect x="703.2" y="21.4" width="3.8" height="4.2" rx="0.5" fill="#7baaf7"/>
<rect x="713.8" y="19.2" width="6.8" height="6" rx="0.8" fill="#3a4656"/><rect x="715" y="20.4" width="4.4" height="3.2" fill="#7d8ea4"/>
<rect x="728" y="19.6" width="6.4" height="5.4" rx="0.6" fill="#c9ccd0"/><rect x="729" y="20.4" width="3" height="2.4" fill="#9a9ea4"/>
<path d="M742.4 19.2 h5 v3.4 l-2.5 2.8 l-2.5 -2.8z" fill="#8d9196"/>
<circle cx="759" cy="22.3" r="3.3" fill="#9b9ea3"/><circle cx="759" cy="22.3" r="1.3" fill="#dcdee0"/>
<circle cx="773" cy="22.3" r="3.2" fill="#e8e8e8"/><path d="M769.8 21.8 a3.2 3.2 0 0 1 6.4 0z" fill="#c62828"/><circle cx="773" cy="23" r="1.1" fill="#444"/>
<rect x="781.6" y="18.4" width="0.4" height="8" fill="#dadce0"/>
<circle cx="792.3" cy="22.2" r="4.6" fill="#3b2a20"/><circle cx="792.3" cy="21.4" r="1.9" fill="#c9a27e"/><path d="M788.8 25 a3.6 3 0 0 1 7 0z" fill="#e8e1d8"/>
<rect x="0" y="30" width="800" height="0.5" fill="#e3e5e8"/>
<rect x="0" y="30.4" width="800" height="21" fill="#ffffff"/>
<rect x="0" y="31.6" width="3.4" height="4.6" fill="#f7ae55"/><rect x="0" y="36.2" width="3.4" height="4.4" fill="#fae07a"/><rect x="0" y="40.6" width="3.4" height="4.2" fill="#dfe98a"/><rect x="0" y="44.8" width="3.4" height="3.8" fill="#86d0f0" stroke="#4aa9d8" stroke-width="0.4"/>

<rect x="10.3" y="36.3" width="9.4" height="8.2" rx="0.8" fill="none" stroke="#3a3f47" stroke-width="0.9"/><rect x="12.2" y="38" width="1.6" height="5" fill="#3a3f47"/><rect x="14.6" y="38" width="3.4" height="5" fill="#3a3f47" opacity="0.55"/><path d="M14.6 38 v5 M16.3 38 v5 M18 38 v5" stroke="#3a3f47" stroke-width="0.5"/>
<text x="26.0" y="43.2" font-size="7.3" fill="#474d63" text-anchor="start" font-weight="bold" textLength="61" lengthAdjust="spacingAndGlyphs">Bodacious Bombul</text>
<rect x="708.2" y="31" width="20.6" height="20.4" fill="#4a8fd6"/>
<rect x="713.3" y="35.9" width="3" height="3" fill="#ffffff"/>
<rect x="717.0" y="35.9" width="3" height="3" fill="#ffffff"/>
<rect x="720.7" y="35.9" width="3" height="3" fill="#ffffff"/>
<rect x="713.3" y="39.6" width="3" height="3" fill="#ffffff"/>
<rect x="717.0" y="39.6" width="3" height="3" fill="#ffffff"/>
<rect x="720.7" y="39.6" width="3" height="3" fill="#ffffff"/>
<rect x="713.3" y="43.3" width="3" height="3" fill="#ffffff"/>
<rect x="717.0" y="43.3" width="3" height="3" fill="#ffffff"/>
<rect x="720.7" y="43.3" width="3" height="3" fill="#ffffff"/>
<rect x="712.6" y="35.2" width="11.8" height="11.8" fill="none" stroke="#cfe2f5" stroke-width="0.6"/>
<path d="M735.2 46.4 l7.6 -8.2" stroke="#7a7f87" stroke-width="1.5" stroke-linecap="round"/><path d="M736 36.4 c4 -2.2 8.6 0.2 10 5.6 c-2 -3.2 -6 -5.4 -10 -5.6z" fill="#444950" stroke="#2e3237" stroke-width="0.7" stroke-linejoin="round"/>
<path d="M755.8 38.2 h2 v-1.6 h3.2 v1.6 h2 v-1.6 h3.2 v1.6 h1.4 v6.6 h-11.8z" fill="#2b466b"/>
<rect x="773.4" y="31" width="0.4" height="20" fill="#e6e8eb"/>
<circle cx="783.6" cy="38.4" r="2.6" fill="none" stroke="#4a4f57" stroke-width="0.7"/><path d="M778.8 46.8 c0 -3.6 2 -5.2 4.8 -5.2 c1.8 0 3.2 0.6 4 1.8" fill="none" stroke="#4a4f57" stroke-width="0.7"/><path d="M778.8 46.8 h6" stroke="#4a4f57" stroke-width="0.7"/><circle cx="789.6" cy="46.6" r="2.2" fill="#2f3640"/><path d="M788.4 46.6 h2.4 M789.6 45.4 v2.4" stroke="#fff" stroke-width="0.5"/>
<circle cx="803" cy="41" r="9" fill="#8fa3bf"/><circle cx="803" cy="41" r="9" fill="none" stroke="#d5dbe5" stroke-width="0.8"/>
<rect x="0" y="51.4" width="800" height="21" fill="#f3f4f5"/>
<rect x="0" y="51.2" width="800" height="0.5" fill="#e1e3e6"/>
<rect x="0" y="72.2" width="800" height="0.5" fill="#e4e6e9"/>
<rect x="68.2" y="52" width="0.5" height="20" fill="#e5e7ea"/>
<rect x="110.4" y="52" width="0.5" height="20" fill="#e5e7ea"/>
<rect x="587.0" y="52" width="0.5" height="20" fill="#e5e7ea"/>
<rect x="653.0" y="52" width="0.5" height="20" fill="#e5e7ea"/>
<rect x="695.0" y="52" width="0.5" height="20" fill="#e5e7ea"/>
<rect x="11" y="58.2" width="6.4" height="8.6" rx="0.6" fill="#fafafa" stroke="#5a5f66" stroke-width="0.7"/><rect x="12.8" y="57" width="2.8" height="1.8" fill="#5a5f66"/><rect x="14.8" y="60.8" width="4.6" height="6" rx="0.5" fill="#fff" stroke="#5a5f66" stroke-width="0.7"/>
<rect x="31.6" y="60.2" width="6.6" height="6.2" rx="0.5" fill="#9aa0a8" stroke="#3e434a" stroke-width="0.7"/><rect x="33.8" y="57.6" width="7" height="6.4" rx="0.5" fill="#fff" stroke="#23272d" stroke-width="1"/>
<path d="M52.8 58.4 h8.8 M55.4 58.2 v-1.8 h3.6 v1.8" fill="none" stroke="#23272d" stroke-width="0.9"/><rect x="53.7" y="58.8" width="7" height="8.2" rx="1" fill="#f0f0f0" stroke="#23272d" stroke-width="0.9"/><path d="M55.6 60.6 v4.8 M57.2 60.6 v4.8 M58.8 60.6 v4.8" stroke="#4a4f56" stroke-width="0.7"/>
<path d="M74.6 61.6 l4 -2.7 v1.7 c2.8 0 4.4 1.3 4.8 3.8 c-1.1 -1.5 -2.6 -2 -4.8 -1.9 v1.8z" fill="#15181c"/>
<path d="M103.4 61.6 l-4 -2.7 v1.7 c-2.8 0 -4.4 1.3 -4.8 3.8 c1.1 -1.5 2.6 -2 4.8 -1.9 v1.8z" fill="#d6d9dd"/>
<g fill="none" stroke="#d3d6dc" stroke-width="0.8">
<path d="M599 56.6 a3.2 3.2 0 0 1 3.2 3.2 c0 2 -1.8 2.8 -2 5.2 h-2.4 c-0.2 -2.4 -2 -3.2 -2 -5.2 a3.2 3.2 0 0 1 3.2 -3.2z M597.8 66.6 h2.4"/>
<path d="M615.6 57.4 h6 l3.2 1.6 v5.2 c0 2 -1.6 2.6 -3.4 2.6 h-3.6 c-1.6 0 -2.2 -1 -2.2 -2.4z"/>
<path d="M636.4 57.6 h8 v3 M636.4 57.6 v8 h3"/><circle cx="643.8" cy="63.6" r="3.4"/>
</g>
<path d="M658.4 57 v10 M659 57.4 h6.6 v3 h-6.6z M659 61.6 h4.6 v3 h-4.6z" fill="#e1e3e8" stroke="#dcdfe4" stroke-width="0.6"/>
<path d="M683.1 55.4 v12.4" stroke="#30343a" stroke-width="0.8"/><path d="M681.6 57.4 v8.4 h-4.6z" fill="#fff" stroke="#30343a" stroke-width="0.8" stroke-linejoin="round"/><path d="M684.6 57.4 v8.4 h4.6z" fill="#5d626a" stroke="#30343a" stroke-width="0.8" stroke-linejoin="round"/>
<rect x="700.2" y="54.2" width="34.8" height="15" rx="1" fill="#f8f9fa" stroke="#e4e6e9" stroke-width="0.5"/>
<text x="717.3" y="63.7" font-size="6.1" fill="#6a6f77" text-anchor="middle" font-weight="normal" >Импорт</text>
<rect x="738.4" y="54.2" width="34.6" height="15" rx="1" fill="#f8f9fa" stroke="#e4e6e9" stroke-width="0.5"/>
<text x="755.6" y="63.7" font-size="6.1" fill="#6a6f77" text-anchor="middle" font-weight="normal" >Экспорт</text>
<rect x="776.4" y="54.2" width="35.6" height="15" rx="1" fill="#f8f9fa" stroke="#e4e6e9" stroke-width="0.5"/>
<text x="777.4" y="63.7" font-size="6.1" fill="#6a6f77" text-anchor="start" font-weight="normal" >Отправить</text>
</svg></body></html>
